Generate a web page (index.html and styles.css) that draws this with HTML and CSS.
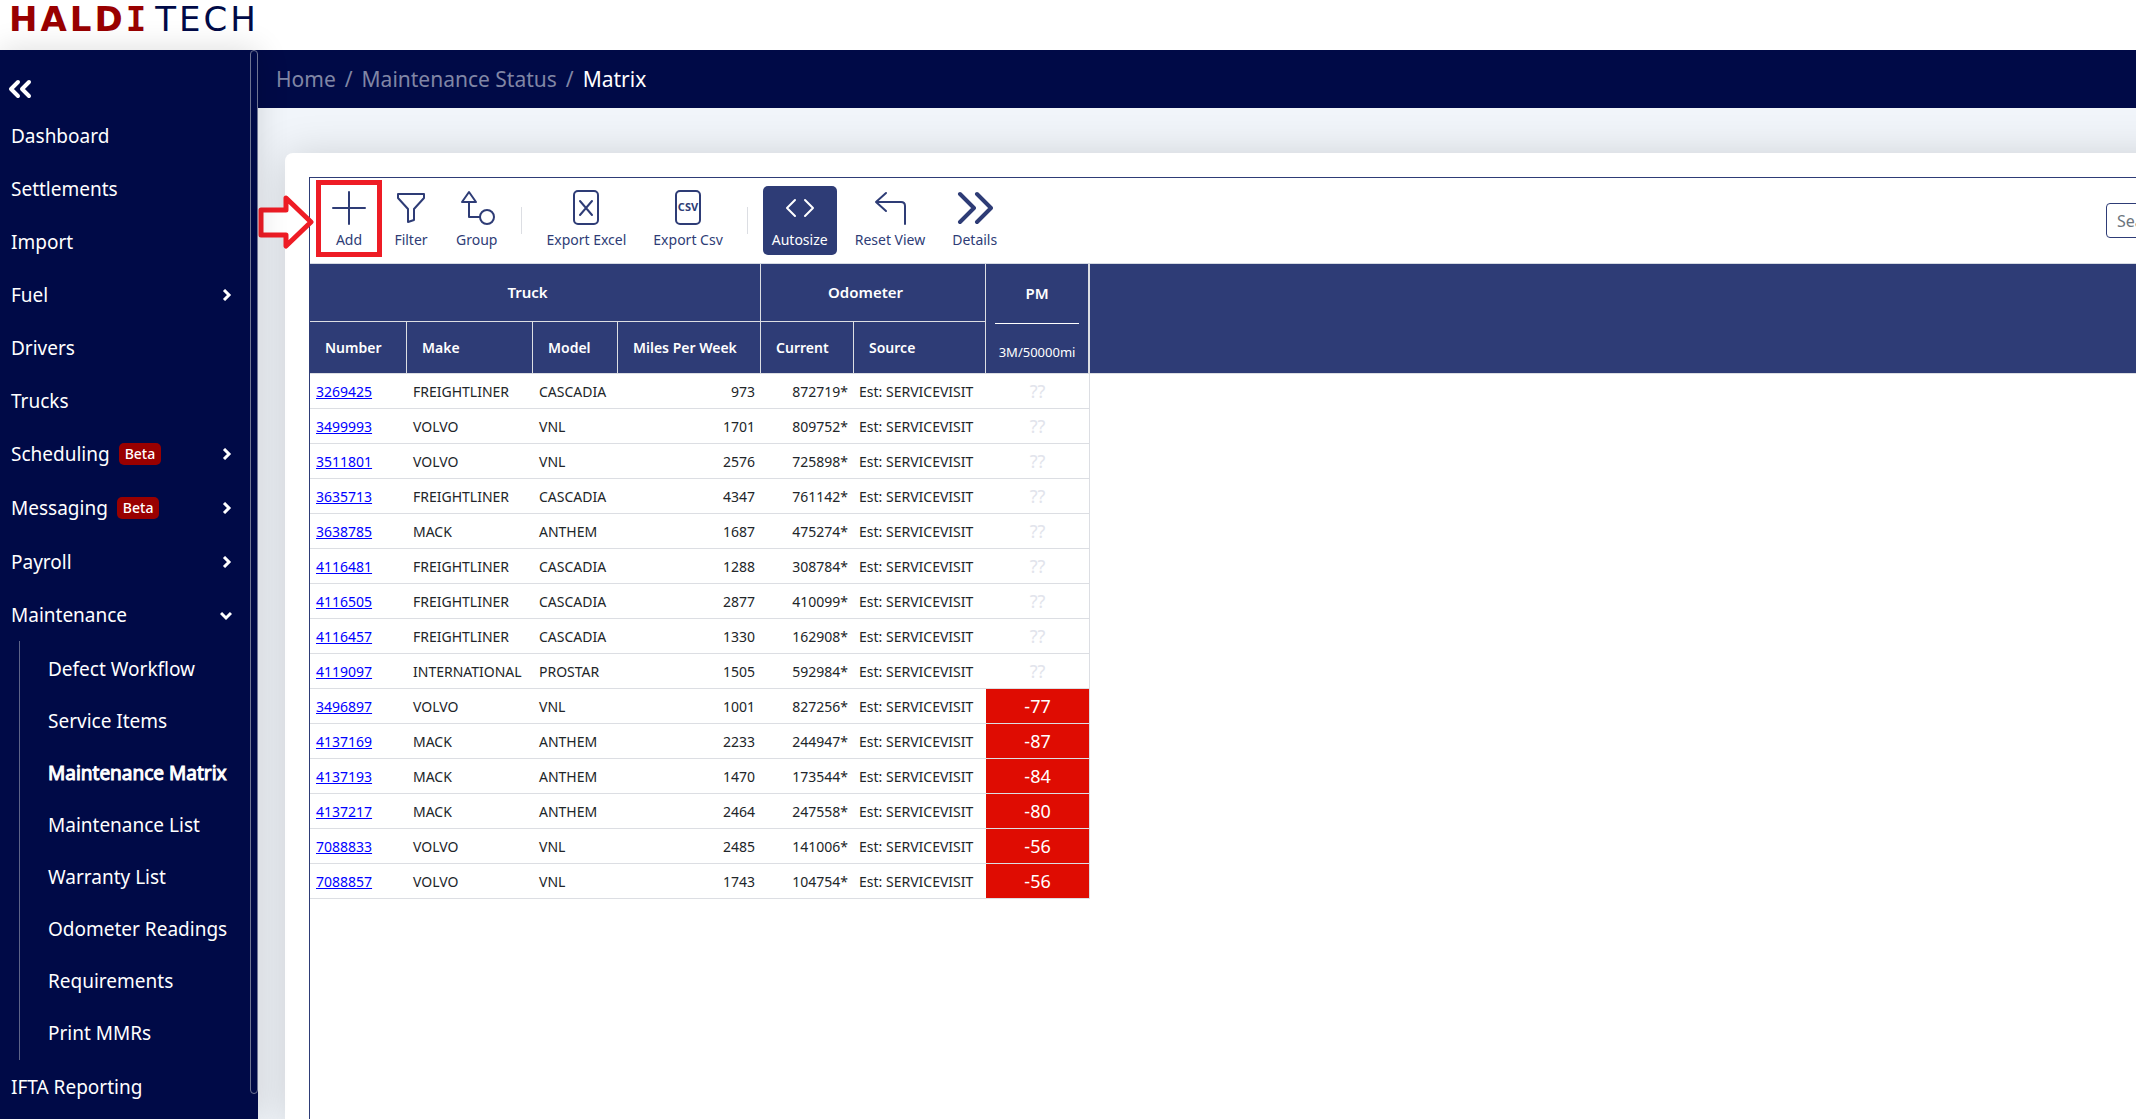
FILE: index.html
```html
<!DOCTYPE html>
<html lang="en">
<head>
<meta charset="utf-8">
<title>Maintenance Matrix</title>
<link rel="stylesheet" href="styles.css">
</head>
<body>
<header class="brand-bar">
  <a class="brand" href="#"><span class="brand-first">HALD<span class="brand-i">I</span></span><span class="brand-second">TECH</span></a>
</header>
<div class="shell">
  <nav class="sidebar" aria-label="Main">
    <button class="collapse" type="button" aria-label="Collapse menu">
      <svg width="24" height="20" viewBox="0 0 24 20"><path d="m10 3-7 7 7 7M21 3l-7 7 7 7"/></svg>
    </button>
    <ul class="menu">
      <li><a href="#">Dashboard</a></li>
      <li><a href="#">Settlements</a></li>
      <li><a href="#">Import</a></li>
      <li><a href="#">Fuel<svg class="caret" width="12" height="12" viewBox="0 0 12 12"><path d="m4 1 5 5-5 5"/></svg></a></li>
      <li><a href="#">Drivers</a></li>
      <li><a href="#">Trucks</a></li>
      <li><a class="tagged" href="#">Scheduling<span class="beta">Beta</span><svg class="caret" width="12" height="12" viewBox="0 0 12 12"><path d="m4 1 5 5-5 5"/></svg></a></li>
      <li><a class="tagged" href="#">Messaging<span class="beta">Beta</span><svg class="caret" width="12" height="12" viewBox="0 0 12 12"><path d="m4 1 5 5-5 5"/></svg></a></li>
      <li><a href="#">Payroll<svg class="caret" width="12" height="12" viewBox="0 0 12 12"><path d="m4 1 5 5-5 5"/></svg></a></li>
      <li><a href="#">Maintenance<svg class="caret" width="12" height="12" viewBox="0 0 12 12"><path d="m1 4 5 5 5-5"/></svg></a>
        <ul class="submenu">
          <li><a href="#">Defect Workflow</a></li>
          <li><a href="#">Service Items</a></li>
          <li><a class="current" href="#" aria-current="page">Maintenance Matrix</a></li>
          <li><a href="#">Maintenance List</a></li>
          <li><a href="#">Warranty List</a></li>
          <li><a href="#">Odometer Readings</a></li>
          <li><a href="#">Requirements</a></li>
          <li><a href="#">Print MMRs</a></li>
        </ul>
      </li>
      <li><a href="#">IFTA Reporting</a></li>
    </ul>
    <span class="scroll-thumb"></span>
  </nav>
  <main class="content">
    <ol class="breadcrumb">
      <li><a href="#">Home</a></li>
      <li><a href="#">Maintenance Status</a></li>
      <li class="here">Matrix</li>
    </ol>
    <section class="card">
      <div class="grid">
        <div class="toolbar">
          <button class="tool tool-add" type="button">
            <svg width="36" height="36" viewBox="0 0 36 36"><path d="M18 2v32M2 18h32"/></svg>Add
            <span class="highlight"></span>
            <svg class="pointer" width="56" height="56" viewBox="0 0 56 56"><path d="M3 16h25V4l25 24-25 24V41H3z"/></svg>
          </button>
          <button class="tool" type="button">
            <svg width="36" height="36" viewBox="0 0 36 36"><path d="M5 4h26v4L21 19v11l-6 2V19L5 8z"/></svg>Filter
          </button>
          <button class="tool" type="button">
            <svg width="36" height="36" viewBox="0 0 36 36"><path d="M10 12v15h11M10 2l7 10H3z"/><circle cx="28" cy="27" r="7"/></svg>Group
          </button>
          <span class="divider"></span>
          <button class="tool" type="button">
            <svg width="36" height="36" viewBox="0 0 36 36"><rect x="6" y="1" width="24" height="33" rx="4"/><path d="m12 11 12 14M24 11 12 25"/></svg>Export Excel
          </button>
          <button class="tool" type="button">
            <svg width="36" height="36" viewBox="0 0 36 36"><rect x="6" y="1" width="24" height="33" rx="4"/><text x="18" y="21" text-anchor="middle">CSV</text></svg>Export Csv
          </button>
          <span class="divider"></span>
          <button class="tool tool-on" type="button" aria-pressed="true">
            <svg width="36" height="36" viewBox="0 0 36 36"><path d="m13 10-8 8 8 8M23 10l8 8-8 8"/></svg>Autosize
          </button>
          <button class="tool" type="button">
            <svg width="36" height="36" viewBox="0 0 36 36"><path d="M14 3 4 12l10 9M4 12h25q4 0 4 4v18"/></svg>Reset View
          </button>
          <button class="tool" type="button">
            <svg class="heavy" width="36" height="36" viewBox="0 0 36 36"><path d="m3 4 14 14L3 32M20 4l14 14-14 14"/></svg>Details
          </button>
          <input class="search" type="search" placeholder="Search" aria-label="Search">
        </div>
        <div class="matrix-wrap">
          <table class="matrix">
            <colgroup><col class="c-number"><col class="c-make"><col class="c-model"><col class="c-miles"><col class="c-current"><col class="c-source"><col class="c-pm"></colgroup>
            <thead>
              <tr class="groups"><th colspan="4">Truck</th><th colspan="2">Odometer</th><th class="pm-head" rowspan="2"><span class="pm-name">PM</span><span class="pm-rule">3M/50000mi</span></th></tr>
              <tr class="fields"><th>Number</th><th>Make</th><th>Model</th><th>Miles Per Week</th><th>Current</th><th>Source</th></tr>
            </thead>
            <tbody>
              <tr><td><a href="#">3269425</a></td><td>FREIGHTLINER</td><td>CASCADIA</td><td class="num">973</td><td class="num">872719*</td><td>Est: SERVICEVISIT</td><td class="unknown">??</td></tr>
              <tr><td><a href="#">3499993</a></td><td>VOLVO</td><td>VNL</td><td class="num">1701</td><td class="num">809752*</td><td>Est: SERVICEVISIT</td><td class="unknown">??</td></tr>
              <tr><td><a href="#">3511801</a></td><td>VOLVO</td><td>VNL</td><td class="num">2576</td><td class="num">725898*</td><td>Est: SERVICEVISIT</td><td class="unknown">??</td></tr>
              <tr><td><a href="#">3635713</a></td><td>FREIGHTLINER</td><td>CASCADIA</td><td class="num">4347</td><td class="num">761142*</td><td>Est: SERVICEVISIT</td><td class="unknown">??</td></tr>
              <tr><td><a href="#">3638785</a></td><td>MACK</td><td>ANTHEM</td><td class="num">1687</td><td class="num">475274*</td><td>Est: SERVICEVISIT</td><td class="unknown">??</td></tr>
              <tr><td><a href="#">4116481</a></td><td>FREIGHTLINER</td><td>CASCADIA</td><td class="num">1288</td><td class="num">308784*</td><td>Est: SERVICEVISIT</td><td class="unknown">??</td></tr>
              <tr><td><a href="#">4116505</a></td><td>FREIGHTLINER</td><td>CASCADIA</td><td class="num">2877</td><td class="num">410099*</td><td>Est: SERVICEVISIT</td><td class="unknown">??</td></tr>
              <tr><td><a href="#">4116457</a></td><td>FREIGHTLINER</td><td>CASCADIA</td><td class="num">1330</td><td class="num">162908*</td><td>Est: SERVICEVISIT</td><td class="unknown">??</td></tr>
              <tr><td><a href="#">4119097</a></td><td>INTERNATIONAL</td><td>PROSTAR</td><td class="num">1505</td><td class="num">592984*</td><td>Est: SERVICEVISIT</td><td class="unknown">??</td></tr>
              <tr><td><a href="#">3496897</a></td><td>VOLVO</td><td>VNL</td><td class="num">1001</td><td class="num">827256*</td><td>Est: SERVICEVISIT</td><td class="overdue">-77</td></tr>
              <tr><td><a href="#">4137169</a></td><td>MACK</td><td>ANTHEM</td><td class="num">2233</td><td class="num">244947*</td><td>Est: SERVICEVISIT</td><td class="overdue">-87</td></tr>
              <tr><td><a href="#">4137193</a></td><td>MACK</td><td>ANTHEM</td><td class="num">1470</td><td class="num">173544*</td><td>Est: SERVICEVISIT</td><td class="overdue">-84</td></tr>
              <tr><td><a href="#">4137217</a></td><td>MACK</td><td>ANTHEM</td><td class="num">2464</td><td class="num">247558*</td><td>Est: SERVICEVISIT</td><td class="overdue">-80</td></tr>
              <tr><td><a href="#">7088833</a></td><td>VOLVO</td><td>VNL</td><td class="num">2485</td><td class="num">141006*</td><td>Est: SERVICEVISIT</td><td class="overdue">-56</td></tr>
              <tr><td><a href="#">7088857</a></td><td>VOLVO</td><td>VNL</td><td class="num">1743</td><td class="num">104754*</td><td>Est: SERVICEVISIT</td><td class="overdue">-56</td></tr>
            </tbody>
          </table>
          <div class="head-fill"></div>
        </div>
      </div>
    </section>
  </main>
</div>
</body>
</html>
```
FILE: styles.css
```css
:root {
  --navy: #000a47;
  --indigo: #2e3c76;
  --line: #dcdee3;
  --alert: #ee1c25;
}

* { box-sizing: border-box; }

body {
  margin: 0;
  height: 100vh;
  display: flex;
  flex-direction: column;
  overflow: hidden;
  font-family: "Noto Sans", sans-serif;
  font-size: 14px;
  color: #212529;
  background: #fff;
}

ul, ol { margin: 0; padding: 0; list-style: none; }
button { font: inherit; color: inherit; background: none; border: 0; padding: 0; }

/* Brand */
.brand-bar { flex: none; height: 50px; padding-left: 9px; }
.brand {
  display: flex;
  gap: 6px;
  font: 34px/38px "DejaVu Sans", sans-serif;
  letter-spacing: 3px;
  text-decoration: none;
}
.brand-first { color: #990000; font-weight: 700; }
.brand-i { font-family: "DejaVu Sans Mono", monospace; }
.brand-second { color: var(--navy); }

.shell { flex: 1; min-height: 0; display: flex; }

/* Sidebar */
.sidebar {
  position: relative;
  z-index: 1;
  flex: none;
  width: 258px;
  overflow: hidden;
  background: var(--navy);
  box-shadow: 0 0 30px rgba(0, 0, 0, .14);
  color: #fff;
  font-size: 19px;
}
.collapse { display: block; height: 59px; padding: 0 8px; }
.collapse svg {
  display: block;
  margin-top: 18px;
  fill: none;
  stroke: #fff;
  stroke-width: 4;
  stroke-linecap: round;
  stroke-linejoin: round;
}
.menu a {
  display: flex;
  align-items: center;
  height: 53px;
  padding: 0 24px 0 11px;
  color: #fff;
  text-decoration: none;
  white-space: nowrap;
}
.menu .tagged { height: 54px; }
.caret { margin-left: auto; margin-right: 2px; width: 12px; fill: none; stroke: #fff; stroke-width: 3; }
.beta {
  margin-left: 9px;
  padding: 0 6px;
  border-radius: 5px;
  background: #990000;
  font-size: 14px;
  line-height: 22px;
  font-weight: 500;
}
.submenu { margin-left: 19px; padding: 2px 0 1px; border-left: 1px solid #5d6488; }
.submenu a { height: 52px; padding: 0 0 0 28px; }
.submenu .current { -webkit-text-stroke: 1px #fff; }
.scroll-thumb {
  position: absolute;
  top: 0;
  right: 0;
  bottom: 25px;
  width: 8px;
  border: 1px solid #6d7391;
  border-radius: 4px;
}

/* Content */
.content {
  flex: 1;
  min-width: 0;
  display: flex;
  flex-direction: column;
  overflow: hidden;
  background: #f1f5fa;
}
.breadcrumb {
  position: relative;
  flex: none;
  display: flex;
  align-items: center;
  height: 58px;
  padding-left: 18px;
  background: var(--navy);
  font-size: 21px;
  color: #8086a5;
}
.breadcrumb a { color: #8086a5; text-decoration: none; }
.breadcrumb li + li::before { content: "/"; padding: 0 9px; color: #8086a5; }
.breadcrumb .here { color: #fff; }

.card {
  flex: 1;
  display: flex;
  margin: 45px -120px 0 27px;
  padding: 24px 0 0 24px;
  border-radius: 8px 0 0 0;
  background: #fff;
  box-shadow: 0 4px 44px rgba(0, 0, 0, .17);
}
.grid { flex: 1; min-width: 0; border: 1px solid var(--indigo); border-width: 1px 0 0 1px; }

/* Toolbar */
.toolbar {
  display: flex;
  align-items: center;
  gap: 9px;
  height: 86px;
  padding: 0 14px 0 13px;
  border-bottom: 1px solid #d5dae3;
  color: var(--indigo);
}
.tool {
  display: flex;
  flex-direction: column;
  align-items: center;
  gap: 4px;
  height: 69px;
  padding: 0 9px;
  border-radius: 5px;
  line-height: 20px;
  white-space: nowrap;
}
.tool svg {
  margin-top: 4px;
  fill: none;
  stroke: currentColor;
  stroke-width: 2;
  stroke-linecap: round;
  stroke-linejoin: round;
}
.tool svg text { font: 700 11px "Noto Sans", sans-serif; fill: currentColor; stroke: none; }
.tool .heavy { stroke-width: 4; }
.tool-add { position: relative; width: 52px; }
.tool-on { background: var(--indigo); color: #fff; }
.divider { width: 1px; height: 27px; margin: 0 6px; background: #dcdee3; }
.search {
  flex: none;
  width: 136px;
  height: 35px;
  margin-left: auto;
  padding: 0 10px;
  border: 1px solid var(--indigo);
  border-radius: 4px;
  font: 16px "Noto Sans", sans-serif;
}
.search::placeholder { color: #6c757d; }

/* Callout over the Add button */
.highlight {
  position: absolute;
  inset: -6px -7px -2px -7px;
  border: 5px solid var(--alert);
}
.tool .pointer {
  position: absolute;
  top: 4px;
  left: -65px;
  fill: #fff;
  stroke: var(--alert);
  stroke-width: 5;
}

/* Matrix */
.matrix-wrap { display: flex; }
.matrix {
  flex: none;
  width: 780px;
  table-layout: fixed;
  border-collapse: separate;
  border-spacing: 0;
}
.c-number { width: 97px; }
.c-make { width: 126px; }
.c-model { width: 85px; }
.c-miles { width: 143px; }
.c-current { width: 93px; }
.c-source { width: 132px; }
.c-pm { width: 104px; }
.matrix th, .matrix td { border-bottom: 1px solid var(--line); white-space: nowrap; }
.matrix th {
  padding: 0;
  border-right: 1px solid var(--line);
  background: var(--indigo);
  color: #fff;
  font-weight: 600;
}
.groups th { height: 58px; padding: 0 15px 2px 0; font-size: 15px; }
.fields th { height: 52px; padding-left: 15px; text-align: left; }
.matrix .pm-head { padding: 0; border-right-width: 2px; }
.pm-name, .pm-rule { display: block; margin: 0 9px; }
.pm-name { height: 60px; line-height: 58px; border-bottom: 1px solid #fff; }
.pm-rule { height: 49px; line-height: 56px; font-size: 13px; font-weight: 400; }
.matrix td { height: 35px; padding: 0 6px; }
.matrix td:nth-child(6) { padding-left: 5px; }
.matrix td a { color: #00f; }
.matrix .num { text-align: right; }
.matrix td:last-child { border-right: 1px solid var(--line); text-align: center; font-size: 18px; line-height: 24px; }
.matrix .unknown { color: #e2e4ec; }
.matrix .overdue { background: #df0c02; color: #fff; }
.head-fill { flex: 1; height: 110px; background: var(--indigo); border-bottom: 1px solid var(--line); }
```
